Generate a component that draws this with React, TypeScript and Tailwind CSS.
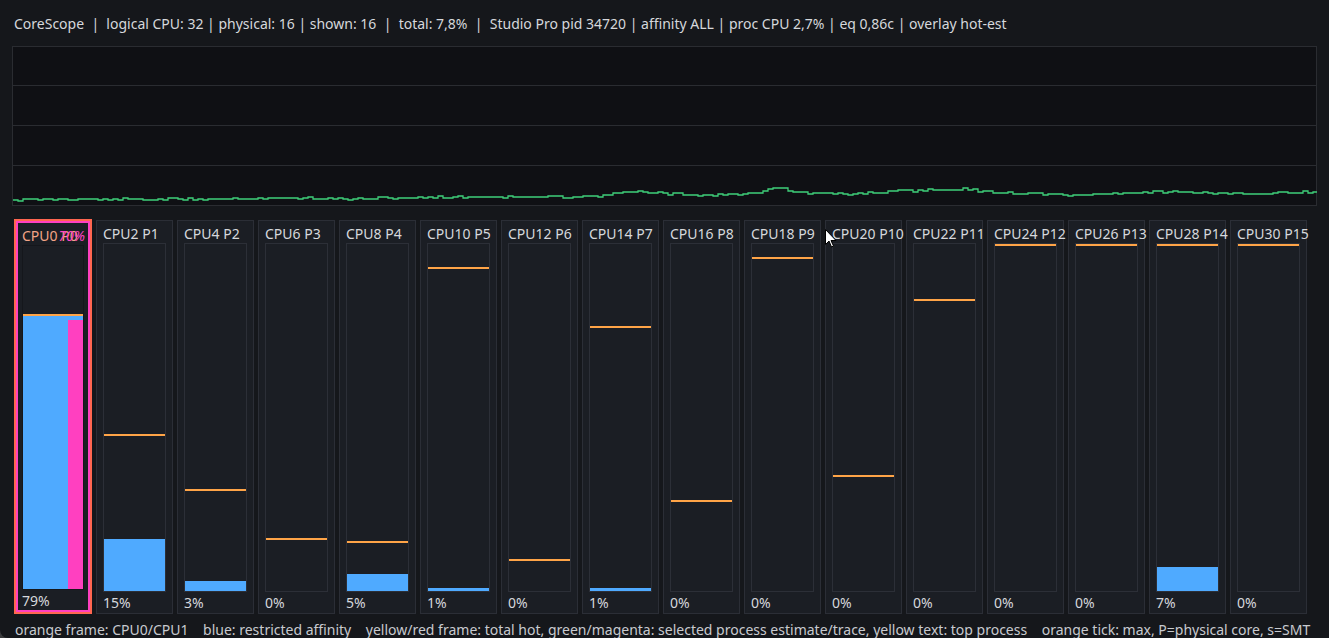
const font = { fontFamily: '"Noto Sans", "Open Sans", sans-serif' };

type Core = { cpu: number; p: number; use: number; max: number };

const cores: Core[] = [
  { cpu: 0, p: 0, use: 79, max: 80 },
  { cpu: 2, p: 1, use: 15, max: 45 },
  { cpu: 4, p: 2, use: 3, max: 29 },
  { cpu: 6, p: 3, use: 0, max: 15 },
  { cpu: 8, p: 4, use: 5, max: 14 },
  { cpu: 10, p: 5, use: 1, max: 93 },
  { cpu: 12, p: 6, use: 0, max: 9 },
  { cpu: 14, p: 7, use: 1, max: 76 },
  { cpu: 16, p: 8, use: 0, max: 26 },
  { cpu: 18, p: 9, use: 0, max: 96 },
  { cpu: 20, p: 10, use: 0, max: 33 },
  { cpu: 22, p: 11, use: 0, max: 84 },
  { cpu: 24, p: 12, use: 0, max: 100 },
  { cpu: 26, p: 13, use: 0, max: 100 },
  { cpu: 28, p: 14, use: 7, max: 100 },
  { cpu: 30, p: 15, use: 0, max: 100 },
];

const keys: [number, number][] = [
  [12, 200], [60, 199], [120, 199.5], [180, 199], [250, 198.5], [300, 198], [350, 199],
  [400, 198], [450, 197], [500, 197], [560, 197], [600, 196], [630, 191], [650, 193],
  [700, 195], [750, 194], [775, 187], [800, 193], [850, 194], [900, 191], [930, 190],
  [960, 189], [990, 192], [1010, 193], [1040, 194], [1070, 196], [1100, 194], [1120, 193],
  [1160, 192], [1190, 193], [1230, 193], [1260, 194], [1290, 192], [1317, 192],
];

function sparkPoints() {
  let seed = 11;
  const rnd = () => {
    seed = (seed * 9301 + 49297) % 233280;
    return seed / 233280;
  };
  const pts: string[] = [];
  for (let x = 13; x <= 1316; x += 5) {
    let i = 0;
    while (i < keys.length - 2 && keys[i + 1][0] < x) i++;
    const [x0, y0] = keys[i];
    const [x1, y1] = keys[i + 1];
    const t = Math.min(1, Math.max(0, (x - x0) / (x1 - x0)));
    const y = Math.round(y0 + (y1 - y0) * t + (rnd() - 0.5) * 2.2);
    pts.push(`${x - 13},${y - 47}`, `${x - 8},${y - 47}`);
  }
  return pts.join(" ");
}

function Card({ c }: { c: Core }) {
  const first = c.cpu === 0;
  const tickTop = Math.max(0, Math.round(347 * (1 - c.max / 100)) - 1);
  const inner = (
    <>
      <div className={`relative h-[22px] pt-[3px] leading-[19px] text-[14px] whitespace-nowrap ${first ? "px-[4px] text-[#f4a486]" : "px-[6px] text-[#d6d8dc]"}`}>
        CPU{c.cpu} P{c.p}
        {first && (
          <span className="absolute right-[3px] top-[3px] italic text-[#ff44c4]">70%</span>
        )}
      </div>
      <div className={`relative h-[349px] border ${first ? "mx-[4px] border-[#15171c]" : "mx-[6px] border-[#2c2f37]"}`}>
        {c.use > 0 && (
          <div
            className="absolute bottom-0 left-0 right-0 bg-[#4faaff]"
            style={{ height: Math.round((347 * c.use) / 100) }}
          />
        )}
        {first && (
          <div className="absolute bottom-0 right-0 w-[15px] h-[269px] bg-[#ff40c0]" />
        )}
        <div className="absolute left-0 right-0 h-[2px] bg-[#ffa447]" style={{ top: tickTop }} />
      </div>
      <div className={`pt-[1px] leading-[19px] text-[14px] text-[#d6d8dc] ${first ? "px-[4px]" : "px-[6px]"}`}>
        {c.use}%
      </div>
    </>
  );
  if (first) {
    return (
      <div className="w-[78px] h-[395px] -mt-px border-2 border-[#ff6650] shrink-0">
        <div className="h-full border-2 border-[#ff40c0] bg-[#1b1e24] flex flex-col">
          {inner}
        </div>
      </div>
    );
  }
  return (
    <div className="w-[77px] h-[394px] border border-[#2b2e36] bg-[#1b1e24] flex flex-col shrink-0">
      {inner}
    </div>
  );
}

export default function App() {
  return (
    <div className="w-[1329px] h-[638px] bg-[#3a3b3d] overflow-hidden" style={font}>
      <div className="relative w-full h-full bg-[#15171b] rounded-bl-[8px] overflow-hidden">
        <div className="h-[46px] pl-[14px] pt-[14px] text-[14px] leading-[19px] text-[#d6d8dc] whitespace-pre">
          {"CoreScope  |  logical CPU: 32 | physical: 16 | shown: 16  |  total: 7,8%  |  Studio Pro pid 34720 | affinity ALL | proc CPU 2,7% | eq 0,86c | overlay hot-est"}
        </div>

        <div className="relative mx-[12px] h-[160px] border border-[#2a2c31] bg-[#0f1014] flex flex-col">
          <div className="h-[39px] border-b border-[#2a2c31]" />
          <div className="h-[40px] border-b border-[#2a2c31]" />
          <div className="h-[40px] border-b border-[#2a2c31]" />
          <div className="flex-1" />
          <svg className="absolute left-0 top-0" width="1304" height="158" viewBox="0 0 1304 158">
            <polyline points={sparkPoints()} fill="none" stroke="#3fcf7a" strokeWidth="1.3" />
          </svg>
        </div>

        <div className="flex gap-[4px] pl-[14px] mt-[14px]">
          {cores.map((c) => (
            <Card key={c.cpu} c={c} />
          ))}
        </div>

        <div className="pl-[15px] pt-[6px] text-[14px] leading-[19px] text-[#c8cacf] whitespace-pre">
          {"orange frame: CPU0/CPU1    blue: restricted affinity    yellow/red frame: total hot, green/magenta: selected process estimate/trace, yellow text: top process    orange tick: max, P=physical core, s=SMT"}
        </div>

        <svg className="absolute left-[825px] top-[229px]" width="12" height="19" viewBox="0 0 12 19">
          <path d="M0.5 0.5 L0.5 15.5 L4 12 L6.5 18 L8.5 17 L6 11.5 L11 11.5 Z" fill="#fff" stroke="#000" strokeWidth="1" />
        </svg>
      </div>
    </div>
  );
}
